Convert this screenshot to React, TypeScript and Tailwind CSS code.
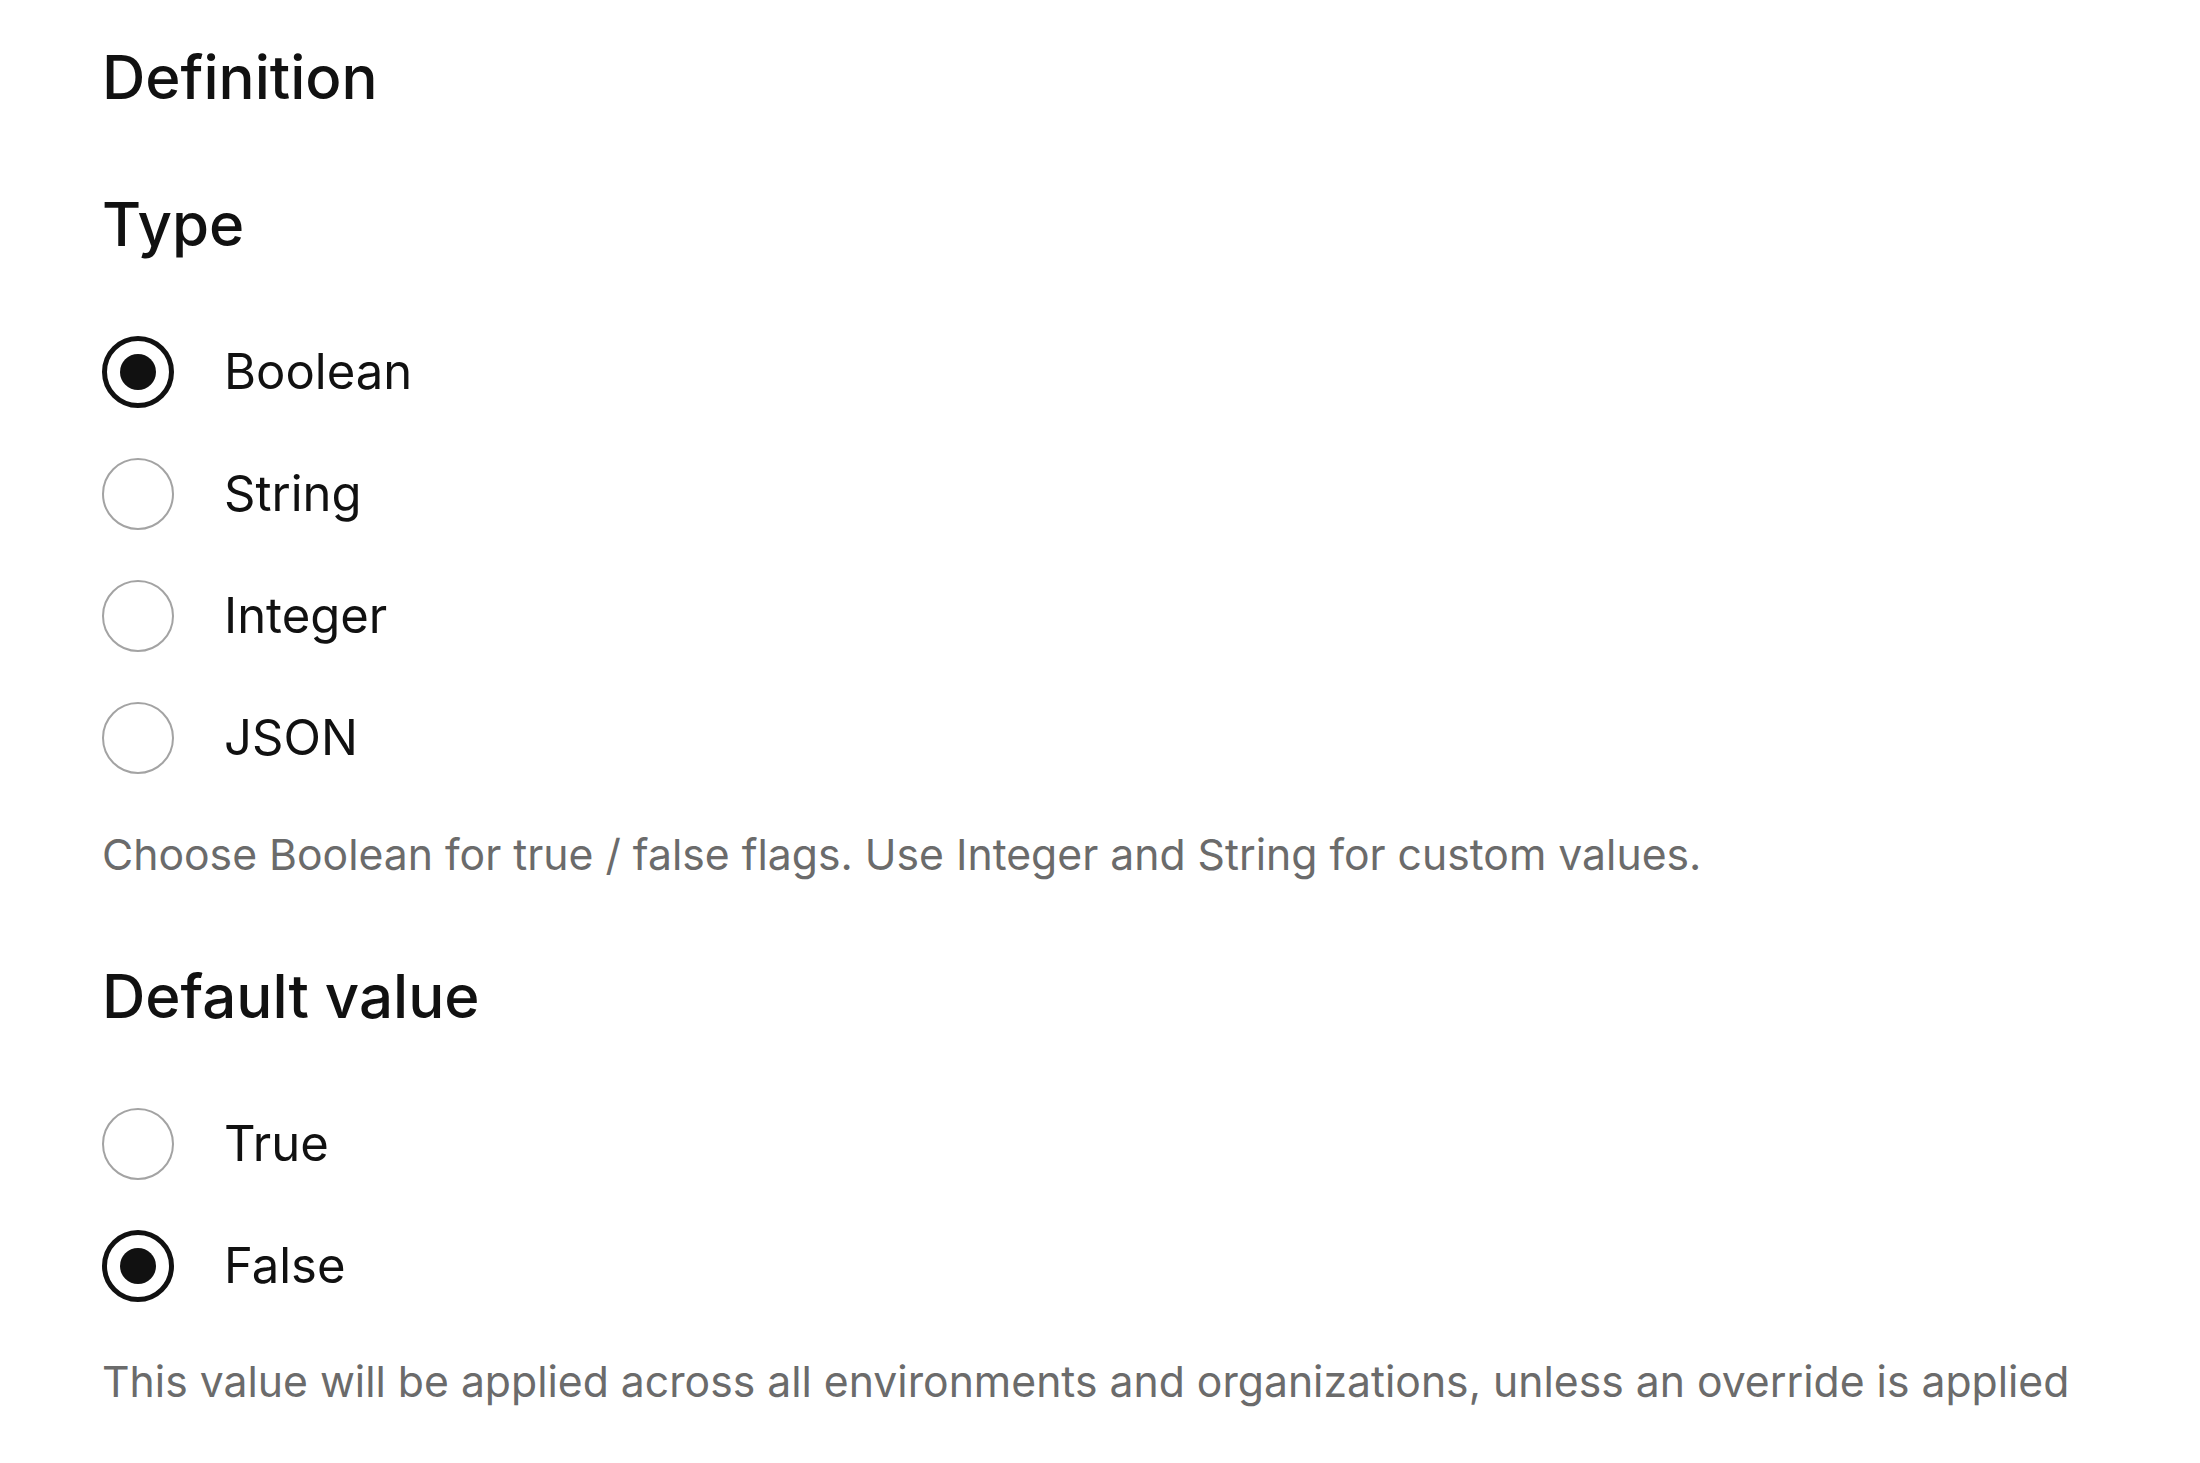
import { useState } from 'react';

const TYPES = ['Boolean', 'String', 'Integer', 'JSON'];
const DEFAULTS = ['True', 'False'];

function Radio({ label, checked, onSelect }: { label: string; checked: boolean; onSelect: () => void }) {
  return (
    <label className="flex items-center h-[72px] cursor-pointer" onClick={onSelect}>
      <span
        className={`w-[72px] h-[72px] rounded-full flex items-center justify-center shrink-0 ${
          checked ? 'border-[5px] border-[#111]' : 'border-[2.5px] border-[#a3a3a3]'
        }`}
      >
        {checked && <span className="w-[36px] h-[36px] rounded-full bg-[#111]" />}
      </span>
      <span className="ml-[50px] text-[49px] leading-[72px] text-[#111]">{label}</span>
    </label>
  );
}

export default function App() {
  const [type, setType] = useState('Boolean');
  const [def, setDef] = useState('False');

  return (
    <div className="min-h-screen bg-white pl-[102px] pt-[41px] font-['Inter',sans-serif]">
      <h1 className="text-[60px] leading-[72px] font-medium text-[#111]">Definition</h1>

      <h2 className="mt-[75px] text-[60px] leading-[72px] font-medium text-[#111]">Type</h2>
      <div className="mt-[76px] flex flex-col gap-[50px]">
        {TYPES.map(t => (
          <Radio key={t} label={t} checked={type === t} onSelect={() => setType(t)} />
        ))}
      </div>
      <p className="mt-[56px] text-[42.7px] leading-[50px] text-[#6b6b6b]">
        Choose Boolean for true / false flags. Use Integer and String for custom values.
      </p>

      <h2 className="mt-[80px] text-[60px] leading-[72px] font-medium text-[#111]">Default value</h2>
      <div className="mt-[76px] flex flex-col gap-[50px]">
        {DEFAULTS.map(d => (
          <Radio key={d} label={d} checked={def === d} onSelect={() => setDef(d)} />
        ))}
      </div>
      <p className="mt-[55px] text-[42.7px] leading-[50px] text-[#6b6b6b]">
        This value will be applied across all environments and organizations, unless an override is applied
      </p>
    </div>
  );
}
